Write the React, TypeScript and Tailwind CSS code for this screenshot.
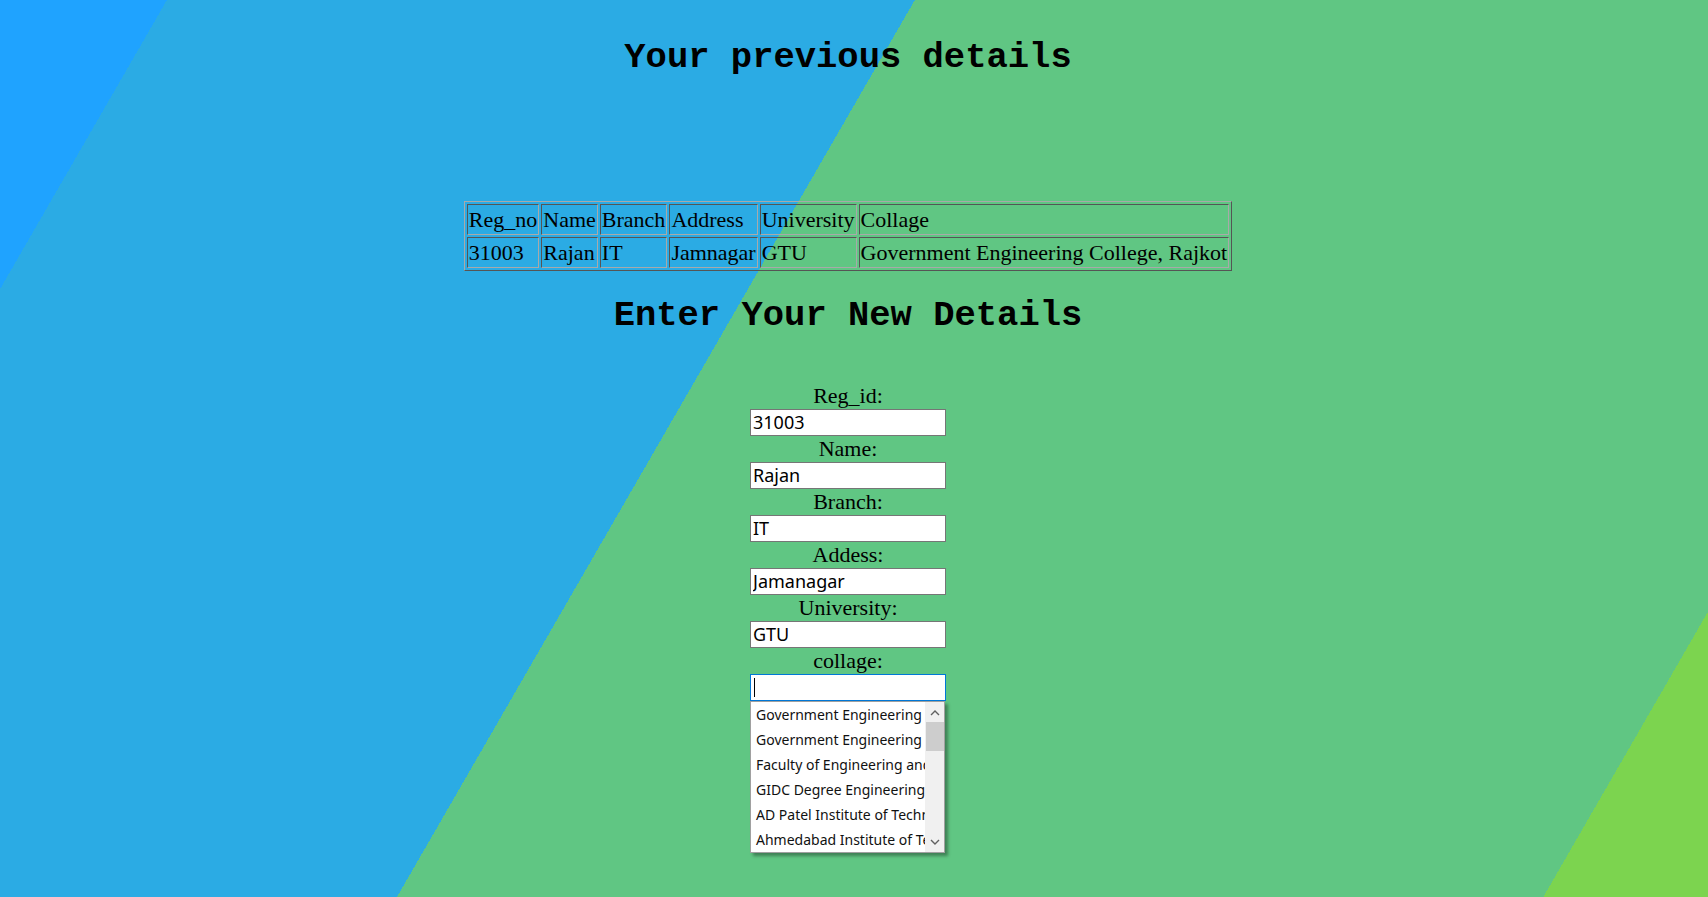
import React from "react";

const rows = [
  ["Reg_no", "Name", "Branch", "Address", "University", "Collage"],
  ["31003", "Rajan", "IT", "Jamnagar", "GTU", "Government Engineering College, Rajkot"],
];

const fields: [string, string][] = [
  ["Reg_id:", "31003"],
  ["Name:", "Rajan"],
  ["Branch:", "IT"],
  ["Addess:", "Jamanagar"],
  ["University:", "GTU"],
];

const colleges = [
  "Government Engineering College, Rajkot",
  "Government Engineering College, Gandhinagar",
  "Faculty of Engineering and Technology",
  "GIDC Degree Engineering College",
  "AD Patel Institute of Technology",
  "Ahmedabad Institute of Technology",
];

function Chevron({ up }: { up?: boolean }) {
  return (
    <svg width="10" height="7" viewBox="0 0 10 7" className="block">
      <path
        d={up ? "M1 6 L5 2 L9 6" : "M1 1 L5 5 L9 1"}
        fill="none"
        stroke="#606060"
        strokeWidth="1.4"
      />
    </svg>
  );
}

export default function App() {
  return (
    <div className="min-h-screen w-full bg-[linear-gradient(120deg,#1fa3ff_7.5%,#2babe4_7.5%,#2babe4_41.1%,#60c683_41.1%,#60c683_92.6%,#7cd44f_92.6%)] font-['Liberation_Serif',serif] text-black">
      <div className="flex flex-col items-center pr-[12px]">
        <h1 className="mt-[38px] h-[40px] text-[35.5px] leading-[40px] font-bold font-['Liberation_Mono',monospace]">
          Your previous details
        </h1>

        <table className="mt-[123px] border-separate border-spacing-x-[2.5px] border-spacing-y-[2px] border border-t-[#a9a9a9] border-l-[#a9a9a9] border-b-[#555555] border-r-[#555555] text-[22px] leading-[27px]">
          <tbody>
            {rows.map((r, i) => (
              <tr key={i}>
                {r.map((c, j) => (
                  <td
                    key={j}
                    className="border border-t-[#555555] border-l-[#555555] border-b-[#a9a9a9] border-r-[#a9a9a9] p-[1px] whitespace-nowrap"
                  >
                    {c}
                  </td>
                ))}
              </tr>
            ))}
          </tbody>
        </table>

        <h2 className="mt-[25px] h-[40px] text-[35.5px] leading-[40px] font-bold font-['Liberation_Mono',monospace]">
          Enter Your New Details
        </h2>

        <form className="mt-[47px] flex flex-col items-center">
          {fields.map(([label, value]) => (
            <React.Fragment key={label}>
              <label className="text-[22px] leading-[26px]">{label}</label>
              <input
                readOnly
                value={value}
                className="w-[196px] h-[27px] border border-[#767676] bg-white px-[2px] text-[18px] font-['Noto_Sans',sans-serif] text-black outline-none"
              />
            </React.Fragment>
          ))}
          <label className="text-[22px] leading-[26px]">collage:</label>
          <div className="relative w-[196px] h-[27px]">
            <div className="h-full w-full border border-[#0078d7] bg-white" />
            <div className="absolute left-[4px] top-[4px] w-[1px] h-[19px] bg-black" />
            <div className="absolute left-0 top-full w-[195px] h-[152px] border border-[#a0a0a0] bg-white shadow-[3px_3px_3px_rgba(0,0,0,0.35)] flex font-['Noto_Sans',sans-serif] text-[14px] text-[#111]">
              <div className="flex-1 overflow-hidden">
                {colleges.map((c) => (
                  <div key={c} className="h-[25px] leading-[25px] pl-[5px] whitespace-nowrap">
                    {c}
                  </div>
                ))}
              </div>
              <div className="w-[19px] bg-[#f0f0f0] flex flex-col items-center">
                <div className="h-[20px] flex items-center justify-center">
                  <Chevron up />
                </div>
                <div className="w-[18px] h-[29px] bg-[#cdcdcd]" />
                <div className="flex-1" />
                <div className="h-[20px] flex items-center justify-center">
                  <Chevron />
                </div>
              </div>
            </div>
          </div>
        </form>
      </div>
    </div>
  );
}
